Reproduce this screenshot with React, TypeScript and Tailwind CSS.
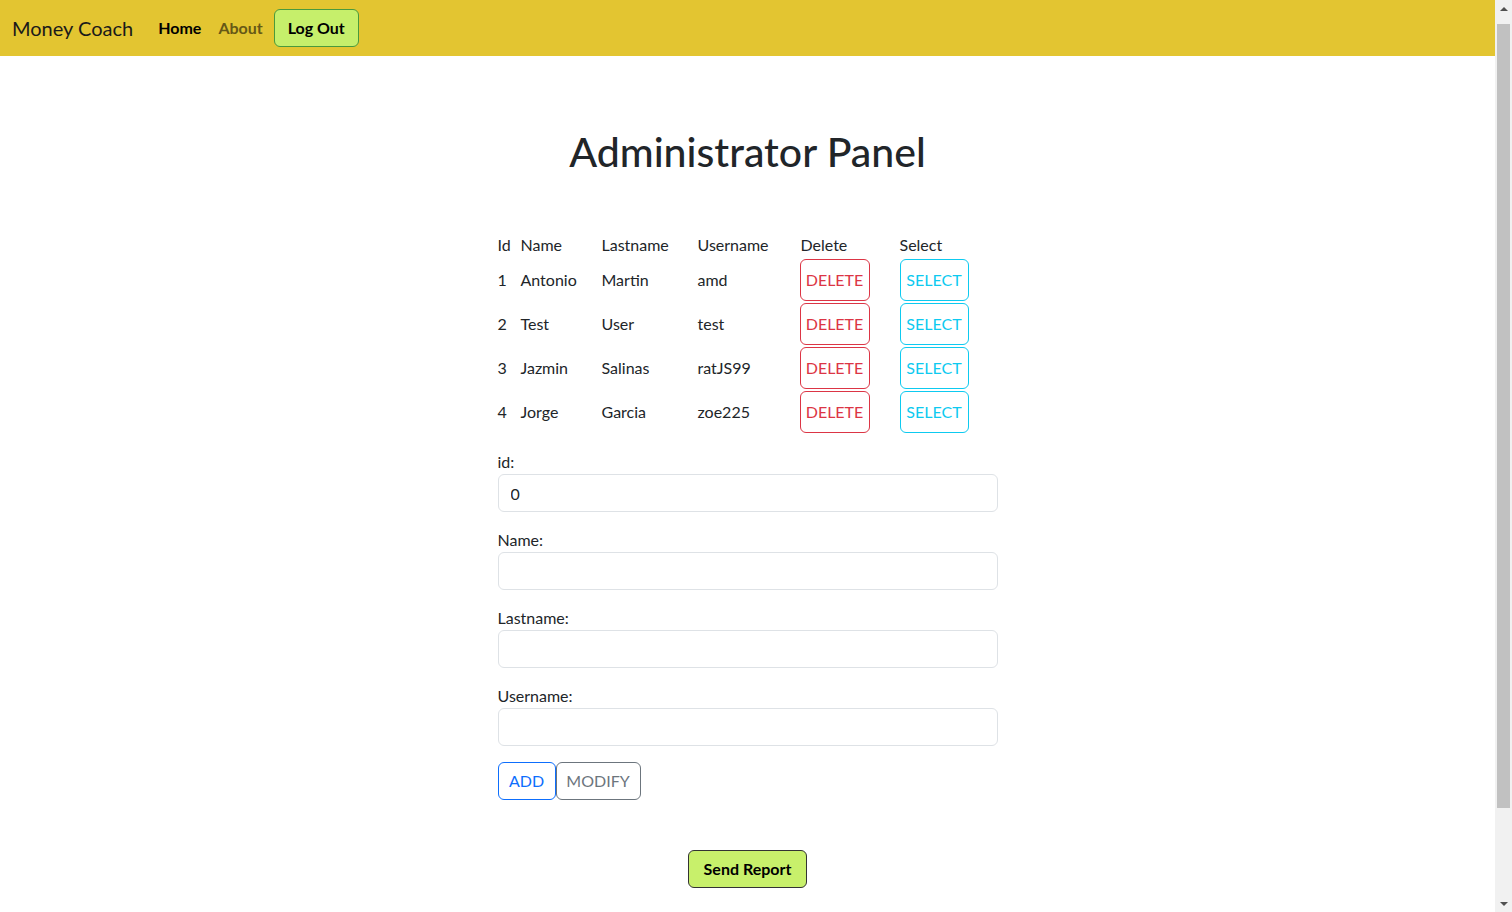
import React from 'react';

type User = { id: number; name: string; lastname: string; username: string };

const USERS: User[] = [
    { id: 1, name: 'Antonio', lastname: 'Martin', username: 'amd' },
    { id: 2, name: 'Test', lastname: 'User', username: 'test' },
    { id: 3, name: 'Jazmin', lastname: 'Salinas', username: 'ratJS99' },
    { id: 4, name: 'Jorge', lastname: 'Garcia', username: 'zoe225' },
];

const FIELDS = ['id', 'Name', 'Lastname', 'Username'];

const Navbar: React.FC = () => (
    <nav className="h-14 bg-[#e3c531] flex items-center px-3">
        <span className="text-xl text-[#1a1a1a] mr-[17px]">Money Coach</span>
        <a className="font-bold text-black px-2">Home</a>
        <a className="font-bold text-[#665816] pl-[9px] pr-2">About</a>
        <button className="ml-[3px] h-[38px] w-[85px] rounded-md border border-[#4a9a3c] bg-[#c6ef6b] font-bold text-black">
            Log Out
        </button>
    </nav>
);

const UsersTable: React.FC = () => (
    <table className="border-collapse text-left">
        <thead>
            <tr>
                <th className="font-normal py-px w-[23px]">Id</th>
                <th className="font-normal py-px w-[81px]">Name</th>
                <th className="font-normal py-px w-[96px]">Lastname</th>
                <th className="font-normal py-px w-[103px]">Username</th>
                <th className="font-normal py-px w-[99px]">Delete</th>
                <th className="font-normal py-px">Select</th>
            </tr>
        </thead>
        <tbody>
            {USERS.map((u) => (
                <tr key={u.id}>
                    <td className="py-px">{u.id}</td>
                    <td className="py-px">{u.name}</td>
                    <td className="py-px">{u.lastname}</td>
                    <td className="py-px">{u.username}</td>
                    <td className="py-px">
                        <button className="-ml-px h-[42px] w-[70px] rounded-md border border-[#dc3545] text-[#dc3545]">DELETE</button>
                    </td>
                    <td className="py-px">
                        <button className="h-[42px] w-[69px] rounded-md border border-[#0dcaf0] text-[#0dcaf0]">SELECT</button>
                    </td>
                </tr>
            ))}
        </tbody>
    </table>
);

const Scrollbar: React.FC = () => (
    <div className="sticky top-0 h-[912px] w-[17px] shrink-0 bg-[#f1f1f1] flex flex-col items-center">
        <div className="h-[17px] flex items-center justify-center">
            <div className="w-0 h-0 border-x-[4px] border-x-transparent border-b-[4px] border-b-[#505050]" />
        </div>
        <div className="mt-[7px] h-[784px] w-[13px] bg-[#c1c1c1]" />
        <div className="mt-auto h-[17px] flex items-center justify-center">
            <div className="w-0 h-0 border-x-[4px] border-x-transparent border-t-[4px] border-t-[#505050]" />
        </div>
    </div>
);

const App: React.FC = () => {
    return (
        <div className="flex items-start bg-white text-[#212529] font-['Lato',sans-serif] text-base leading-6">
            <div className="w-[1495px] min-h-[1021px]">
                <Navbar />
                <main className="w-[500px] mx-auto pt-[72px] pb-[133px]">
                    <h1 className="text-[41px] leading-[48px] font-medium text-center -mx-20">Administrator Panel</h1>
                    <div className="mt-[56px]">
                        <UsersTable />
                    </div>
                    <form className="mt-4">
                        {FIELDS.map((f) => (
                            <div key={f} className="mb-4">
                                <label className="block">{f}:</label>
                                <input
                                    defaultValue={f === 'id' ? '0' : ''}
                                    className="block w-full h-[38px] px-3 rounded-md border border-[#dee2e6] text-[#212529]"
                                />
                            </div>
                        ))}
                        <div className="flex">
                            <button type="button" className="h-[38px] w-[58px] rounded-md border border-[#0d6efd] text-[#0d6efd]">ADD</button>
                            <button type="button" className="h-[38px] w-[85px] rounded-md border border-[#6c757d] text-[#6c757d]">MODIFY</button>
                        </div>
                    </form>
                    <div className="mt-[50px] flex justify-center">
                        <button className="h-[38px] w-[119px] rounded-md border border-[#333] bg-[#c8f06b] font-bold text-black">Send Report</button>
                    </div>
                </main>
            </div>
            <Scrollbar />
        </div>
    );
};

export default App;
